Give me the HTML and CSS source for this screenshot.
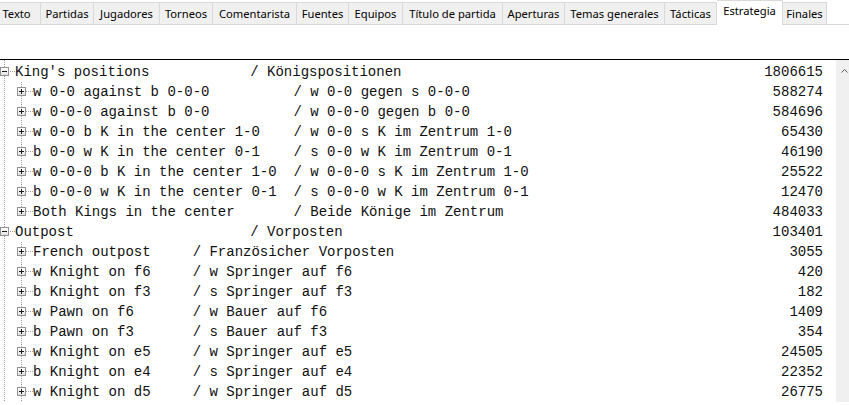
FILE: index.html
```html
<!DOCTYPE html>
<html lang="es">
  <head>
    <meta charset="UTF-8" />
    <meta name="viewport" content="width=device-width, initial-scale=1.0" />
    <title>Estrategia</title>
    <link rel="stylesheet" href="styles.css">
  </head>
  <body>
    <div class="tabs">
      <div class="tab">Texto</div>
      <div class="tab">Partidas</div>
      <div class="tab">Jugadores</div>
      <div class="tab">Torneos</div>
      <div class="tab">Comentarista</div>
      <div class="tab">Fuentes</div>
      <div class="tab">Equipos</div>
      <div class="tab">Título de partida</div>
      <div class="tab">Aperturas</div>
      <div class="tab">Temas generales</div>
      <div class="tab">Tácticas</div>
      <div class="tab active">Estrategia</div>
      <div class="tab">Finales</div>
    </div>
    <div class="toolbar"></div>
    <div class="panel">
      <div class="tree">
        <div class="row lvl1"><span class="box minus"></span><span class="en w28">King's positions</span><span class="de">/ Königspositionen</span><span class="count">1806615</span></div>
        <div class="kids">
          <div class="row lvl2"><span class="box plus"></span><span class="en w31">w 0-0 against b 0-0-0</span><span class="de">/ w 0-0 gegen s 0-0-0</span><span class="count">588274</span></div>
          <div class="row lvl2"><span class="box plus"></span><span class="en w31">w 0-0-0 against b 0-0</span><span class="de">/ w 0-0-0 gegen b 0-0</span><span class="count">584696</span></div>
          <div class="row lvl2"><span class="box plus"></span><span class="en w31">w 0-0 b K in the center 1-0</span><span class="de">/ w 0-0 s K im Zentrum 1-0</span><span class="count">65430</span></div>
          <div class="row lvl2"><span class="box plus"></span><span class="en w31">b 0-0 w K in the center 0-1</span><span class="de">/ s 0-0 w K im Zentrum 0-1</span><span class="count">46190</span></div>
          <div class="row lvl2"><span class="box plus"></span><span class="en w31">w 0-0-0 b K in the center 1-0</span><span class="de">/ w 0-0-0 s K im Zentrum 1-0</span><span class="count">25522</span></div>
          <div class="row lvl2"><span class="box plus"></span><span class="en w31">b 0-0-0 w K in the center 0-1</span><span class="de">/ s 0-0-0 w K im Zentrum 0-1</span><span class="count">12470</span></div>
          <div class="row lvl2 last"><span class="box plus"></span><span class="en w31">Both Kings in the center</span><span class="de">/ Beide Könige im Zentrum</span><span class="count">484033</span></div>
        </div>
        <div class="row lvl1"><span class="box minus"></span><span class="en w28">Outpost</span><span class="de">/ Vorposten</span><span class="count">103401</span></div>
        <div class="kids">
          <div class="row lvl2"><span class="box plus"></span><span class="en w19">French outpost</span><span class="de">/ Französicher Vorposten</span><span class="count">3055</span></div>
          <div class="row lvl2"><span class="box plus"></span><span class="en w19">w Knight on f6</span><span class="de">/ w Springer auf f6</span><span class="count">420</span></div>
          <div class="row lvl2"><span class="box plus"></span><span class="en w19">b Knight on f3</span><span class="de">/ s Springer auf f3</span><span class="count">182</span></div>
          <div class="row lvl2"><span class="box plus"></span><span class="en w19">w Pawn on f6</span><span class="de">/ w Bauer auf f6</span><span class="count">1409</span></div>
          <div class="row lvl2"><span class="box plus"></span><span class="en w19">b Pawn on f3</span><span class="de">/ s Bauer auf f3</span><span class="count">354</span></div>
          <div class="row lvl2"><span class="box plus"></span><span class="en w19">w Knight on e5</span><span class="de">/ w Springer auf e5</span><span class="count">24505</span></div>
          <div class="row lvl2"><span class="box plus"></span><span class="en w19">b Knight on e4</span><span class="de">/ s Springer auf e4</span><span class="count">22352</span></div>
          <div class="row lvl2"><span class="box plus"></span><span class="en w19">w Knight on d5</span><span class="de">/ w Springer auf d5</span><span class="count">26775</span></div>
        </div>
      </div>
      <div class="scrollbar">
        <svg width="7" height="4" viewBox="0 0 7 4"><polyline points="0.5,3.5 3.5,0.5 6.5,3.5" fill="none" stroke="#606060" stroke-width="1" /></svg>
      </div>
    </div>
  </body>
</html>
```

FILE: styles.css
```css
body {
  margin: 0;
  background: #fff;
  font-family: "Noto Sans", "Open Sans", sans-serif;
  overflow: hidden;
}
/* tab strip, scrolled a little to the left */
.tabs {
  display: grid;
  grid-template-columns: 48px 53px 66px 53px 84px 52px 54px 100px 62px 100px 52px 66px 44px;
  align-items: end;
  margin-left: -7px;
  height: 25px;
  box-sizing: border-box;
  border-bottom: 1px solid #d9d9d9;
}
.tab {
  height: 22px;
  box-sizing: border-box;
  padding-top: 1px;
  border-top: 1px solid #d9d9d9;
  border-right: 1px solid #d9d9d9;
  background-color: #f0f0f0;
  font-size: 11.2px;
  line-height: 20px;
  text-align: center;
  white-space: nowrap;
  color: #000;
}
.tab.active {
  height: 25px;
  margin-bottom: -1px;
  padding-top: 0;
  background-color: #fff;
}
.toolbar {
  height: 34px;
}
.panel {
  display: flex;
  border-top: 1px solid #000;
}
.tree {
  flex: 1;
  padding: 2px 13px 0 0;
  font-family: "Liberation Mono", "Courier New", monospace;
  font-size: 14px;
  color: #111;
  background: repeating-linear-gradient(to bottom, #a0a0a0 0 1px, transparent 1px 2px) 4px 0 / 1px 100% no-repeat;
}
.row {
  display: flex;
  height: 20px;
  line-height: 20px;
  white-space: pre;
}
.lvl1 {
  background: repeating-linear-gradient(to right, #a0a0a0 0 1px, transparent 1px 2px) 10px 9px / 5px 1px no-repeat;
}
.lvl2 {
  padding-left: 17px;
  background:
    repeating-linear-gradient(to right, #a0a0a0 0 1px, transparent 1px 2px) 26px 9px / 7px 1px no-repeat,
    repeating-linear-gradient(to bottom, #a0a0a0 0 1px, transparent 1px 2px) 21px 0 / 1px 100% no-repeat;
}
.lvl2.last {
  background-size: 7px 1px, 1px 9px;
}
.box {
  flex: none;
  width: 9px;
  height: 9px;
  margin-top: 5px;
  box-sizing: border-box;
  border: 1px solid #919191;
  background-color: #f4f4f4;
}
.lvl1 .box {
  margin-right: 6px;
}
.lvl2 .box {
  margin-right: 7px;
}
.minus {
  background: linear-gradient(#1c1c1c, #1c1c1c) center / 5px 1px no-repeat, linear-gradient(#fff, #e3e3e3);
}
.plus {
  background:
    linear-gradient(#1c1c1c, #1c1c1c) center / 5px 1px no-repeat,
    linear-gradient(#1c1c1c, #1c1c1c) center / 1px 5px no-repeat,
    linear-gradient(#fff, #e3e3e3);
}
.en {
  flex: none;
}
.w28 {
  width: 28ch;
}
.w31 {
  width: 31ch;
}
.w19 {
  width: 19ch;
}
.count {
  margin-left: auto;
}
.scrollbar {
  width: 13px;
  padding: 9px 0 0 5px;
  box-sizing: border-box;
  background-color: #f0f0f0;
}
.scrollbar svg {
  display: block;
}
```
